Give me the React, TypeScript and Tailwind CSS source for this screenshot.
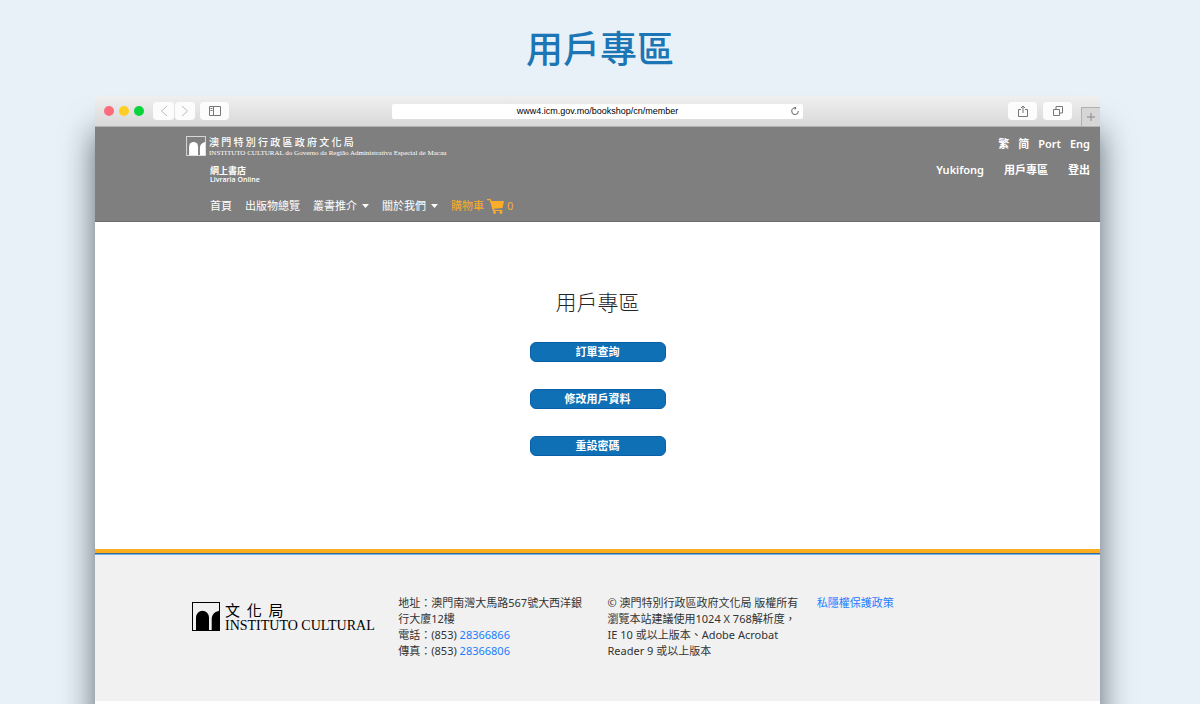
import React from "react";

const SANS = "font-['Noto_Sans','Noto_Sans_CJK_TC',sans-serif]";

function ArchLogo({ className, ink, sky }: { className: string; ink: string; sky: string }) {
  return (
    <svg className={className} viewBox="0 0 28 29" aria-hidden="true">
      <rect x="0.5" y="0.5" width="27" height="28" fill={sky} stroke={ink} />
      <path d="M4 28V15.500a6.500 6.800 0 0 1 13 0V28Z" fill={ink} />
      <path d="M19.700 28V17c0-4.500 3-7.500 7.800-8.300V28Z" fill={ink} />
    </svg>
  );
}

function BrowserBar() {
  return (
    <div className="flex h-[31px] items-center rounded-t border-b border-[#b4b4b4] bg-linear-to-b from-[#efefef] to-[#d9d9d9] pl-[9px]">
      <div className="flex gap-[5px]">
        <span className="size-[10px] rounded-full bg-[#fd6b7d]" />
        <span className="size-[10px] rounded-full bg-[#ffce25]" />
        <span className="size-[10px] rounded-full bg-[#0bd33c]" />
      </div>
      <div className="ml-[9px] flex gap-px">
        <button aria-label="Back" className="flex h-[18px] w-[21px] items-center justify-center rounded bg-[#fcfcfc]">
          <svg className="h-3 w-2" viewBox="0 0 8 12" fill="none" stroke="#bdbdbd"><path d="M7 1 1.500 6 7 11" /></svg>
        </button>
        <button aria-label="Forward" className="flex h-[18px] w-[20px] items-center justify-center rounded bg-[#fcfcfc]">
          <svg className="h-3 w-2" viewBox="0 0 8 12" fill="none" stroke="#bdbdbd"><path d="m1 1 5.500 5L1 11" /></svg>
        </button>
      </div>
      <button aria-label="Sidebar" className="ml-[5px] flex h-[18px] w-[29px] items-center justify-center rounded bg-[#fcfcfc]">
        <svg className="h-[10px] w-3" viewBox="0 0 12 10" fill="none" stroke="#777"><path d="M.5.5h11v9H.5zM4.500.5v9M1.500 2.500h2M1.500 4.500h2" /></svg>
      </button>
      <div className="flex flex-1 justify-center pr-[42px]">
        <div className="flex h-[15px] w-[411px] items-center rounded-xs bg-white pr-1">
          <input
            aria-label="Address"
            readOnly
            value="www4.icm.gov.mo/bookshop/cn/member"
            className="h-[15px] min-w-0 flex-1 bg-transparent pl-3 text-center font-['Liberation_Sans',sans-serif] text-[9px] text-black outline-none"
          />
          <button aria-label="Reload">
            <svg className="size-2" viewBox="0 0 8 8" fill="none" stroke="#555" strokeWidth="0.9"><path d="M7.300 4A3.300 3.300 0 1 1 4.500 1M3.500 0 5 1 3.800 2.500" /></svg>
          </button>
        </div>
      </div>
      <button aria-label="Share" className="flex h-[18px] w-[29px] items-center justify-center rounded bg-[#fcfcfc]">
        <svg className="h-3 w-[10px]" viewBox="0 0 10 12" fill="none" stroke="#777"><path d="M3 4.500H.5v7h9v-7H7M5 8V1M3 3l2-2 2 2" /></svg>
      </button>
      <button aria-label="Tabs" className="ml-[6px] flex h-[18px] w-[29px] items-center justify-center rounded bg-[#fcfcfc]">
        <svg className="size-[10px]" viewBox="0 0 10 10" fill="none" stroke="#777"><path d="M.5 3.500h6v6h-6zM3 3.500v-3h6.500V7h-3" /></svg>
      </button>
      <button aria-label="New tab" className="ml-[9px] flex h-[19px] w-[19px] items-center justify-center self-end border-t border-l border-[#b0b0b0] bg-[#d6d6d6]">
        <svg className="size-2" viewBox="0 0 8 8" stroke="#888"><path d="M4 0v8M0 4h8" /></svg>
      </button>
    </div>
  );
}

function Caret() {
  return (
    <svg className="h-[4px] w-[7px]" viewBox="0 0 7 4" fill="currentColor" aria-hidden="true"><path d="M0 0h7L3.500 4Z" /></svg>
  );
}

function SiteHeader() {
  return (
    <header className="flex h-[95px] justify-between border-b border-[#6c6c6c] bg-[#7f7f7f] pr-[10px] pl-[91px] text-white">
      <div>
        <a href="#home" className="flex gap-[3px] pt-[9px]">
          <ArchLogo className="h-5 w-5" ink="#ffffff" sky="#7f7f7f" />
          <span className="block whitespace-nowrap">
            <span className="block font-['Noto_Sans_CJK_TC',sans-serif] text-[10px] leading-3 font-medium">澳 門 特 別 行 政 區 政 府 文 化 局</span>
            <span className="block font-['Liberation_Serif',serif] text-[7px] leading-[10px]">INSTITUTO CULTURAL do Governo da Região Administrativa Especial de Macau</span>
          </span>
        </a>
        <div className="pt-[7px] pl-6 font-bold">
          <div className="text-[9px] leading-[11px]">網上書店</div>
          <div className="font-['Open_Sans',sans-serif] text-[7px] leading-2 font-semibold">Livraria Online</div>
        </div>
        <nav className="flex items-center gap-[13px] pt-[14px] pl-6 text-[11px] leading-4 whitespace-nowrap">
          <a href="#home">首頁</a>
          <a href="#publications">出版物總覽</a>
          <button className="flex items-center gap-[5px]">叢書推介<Caret /></button>
          <button className="flex items-center gap-[5px]">關於我們<Caret /></button>
          <a href="#cart" className="flex items-center gap-[3px] text-[#f9ad2b]">
            購物車
            <svg className="h-[15px] w-[17px]" viewBox="0 0 17 15" fill="currentColor" aria-hidden="true">
              <path d="M0 0h3.500l1 2H17l-1.500 7-8.500.7.500 1.300h8V12H6L2.700 1.200H0Z" />
              <circle cx="7.500" cy="13.500" r="1.400" />
              <circle cx="14" cy="13.500" r="1.400" />
            </svg>
            0
          </a>
        </nav>
      </div>
      <div className="pt-[9px] text-[11px] leading-4 font-semibold">
        <div className="flex justify-end gap-[9px]">
          <a href="#zh-hant">繁</a>
          <a href="#zh-hans">简</a>
          <a href="#pt">Port</a>
          <a href="#en">Eng</a>
        </div>
        <div className="flex justify-end gap-5 pt-[10px]">
          <a href="#profile">Yukifong</a>
          <a href="#member">用戶專區</a>
          <a href="#logout">登出</a>
        </div>
      </div>
    </header>
  );
}

const actions = ["訂單查詢", "修改用戶資料", "重設密碼"];

export default function App() {
  return (
    <div className={`flex min-h-screen flex-col overflow-hidden bg-[#e8f0f8] ${SANS}`}>
      <h1 className="pt-[19px] pb-[17px] text-center text-[37px] leading-[60px] font-medium text-[#1c75b5]">用戶專區</h1>
      <div className="mr-[100px] ml-[95px] flex flex-1 flex-col rounded-t bg-white shadow-[0_36px_32px_rgba(20,30,35,0.65)]">
        <BrowserBar />
        <SiteHeader />
        <main className="flex flex-col items-center bg-white pt-16 pb-[93px]">
          <h2 className="pb-6 text-[21px] leading-8 font-light text-[#212529]">用戶專區</h2>
          <div className="flex flex-col gap-[27px]">
            {actions.map((label) => (
              <button key={label} className="h-5 w-[136px] rounded-md border border-[#0a60a8] bg-[#0f70b5] text-[11px] leading-4 font-bold text-white">
                {label}
              </button>
            ))}
          </div>
        </main>
        <footer className="border-t-4 border-[#fbae1f] bg-[#f1f1f1]">
          <div className="h-px bg-[#3a6a8e]" />
          <div className="h-px bg-[#6db3f2]" />
          <div className="mx-auto grid max-w-[837px] grid-cols-4 pt-10 pb-10 text-[11px] leading-4 text-[#333]">
            <div className="pl-[13px]">
              <a href="#icm" className="flex gap-[5px] pt-[7px] whitespace-nowrap text-black">
                <ArchLogo className="h-[29px] w-7 shrink-0" ink="#000000" sky="#f1f1f1" />
                <span className="block">
                  <span className="block font-['Noto_Sans_CJK_TC',sans-serif] text-[15px] leading-4">文&nbsp;&nbsp;化&nbsp;&nbsp;局</span>
                  <span className="block font-['Liberation_Serif',serif] text-[14px] leading-4">INSTITUTO CULTURAL</span>
                </span>
              </a>
            </div>
            <address className="h-[66px] pr-[6px] pl-[10px] not-italic">
              地址：澳門南灣大馬路567號大西洋銀行大廈12樓
              <br />
              電話：(853) <a href="tel:28366866" className="text-[#1a7dff]">28366866</a>
              <br />
              傳真：(853) <a href="tel:28366806" className="text-[#1a7dff]">28366806</a>
            </address>
            <p className="pr-[6px] pl-[10px]">
              © 澳門特別行政區政府文化局 版權所有
              <br />
              瀏覽本站建議使用1024 X 768解析度，IE 10 或以上版本、Adobe Acrobat Reader 9 或以上版本
            </p>
            <div className="pl-[10px]">
              <a href="#privacy" className="text-[#1a7dff]">私隱權保護政策</a>
            </div>
          </div>
        </footer>
      </div>
    </div>
  );
}
